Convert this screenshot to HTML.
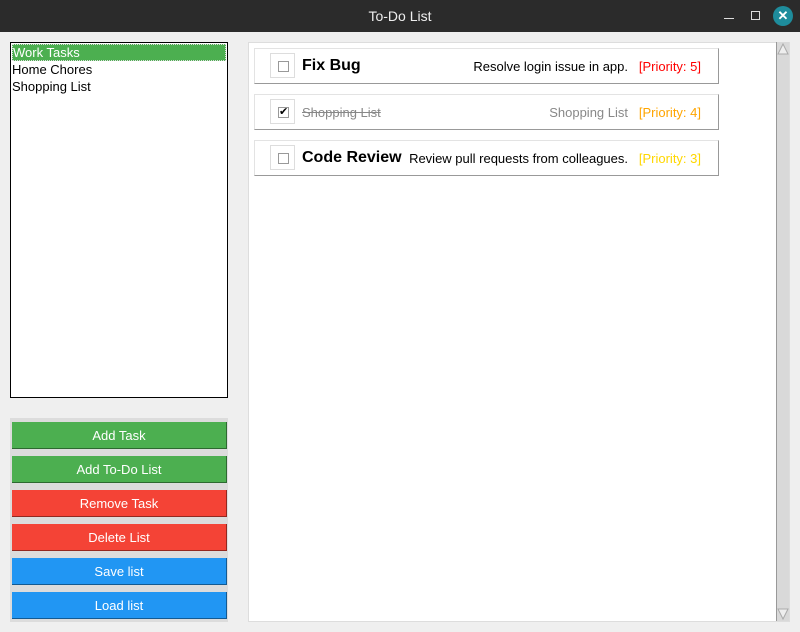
<!DOCTYPE html>
<html><head><style>
*{margin:0;padding:0;box-sizing:border-box}
body{width:800px;height:632px;background:#efefef;font-family:"Liberation Sans",sans-serif;position:relative;overflow:hidden}
.tb{position:absolute;left:0;top:0;width:800px;height:32px;background:#2b2b2b;color:#eee;font-size:14px;text-align:center;line-height:32px}
.lb{position:absolute;left:10px;top:42px;width:218px;height:356px;background:#fff;border:1px solid #000;font-size:13px}
.lb div{height:17px;line-height:17px;padding-left:1px}
.lb .sel{background:#4caf50;color:#fff;border:1px dotted #ddd;margin:1px 1px 0;padding-left:0;line-height:15px}
.bf{position:absolute;left:10px;top:418px;width:218px;height:204px;background:#dcdcdc}
.btn{position:absolute;left:2px;width:215px;height:27px;color:#fff;font-size:13px;text-align:center;line-height:27px;border-right:1px solid rgba(0,0,0,.4);border-bottom:1px solid rgba(0,0,0,.4)}
.g{background:#4caf50}.r{background:#f44336}.b{background:#2196f3}
.rp{position:absolute;left:248px;top:42px;width:542px;height:580px;background:#fff;border:1px solid #ddd}
.sb{position:absolute;left:776px;top:42px;width:13px;height:579px;background:#d9d9d9;border-left:1px solid #999}
.row{position:absolute;left:254px;width:465px;height:36px;border:1px solid #e3e3e3;border-right-color:#999;border-bottom:1px solid #999;background:#fff}
.cb{position:absolute;left:15px;top:4px;width:25px;height:25px;border:1px solid #ddd}
.cb i{position:absolute;left:7px;top:7px;width:11px;height:11px;border:1px solid #999;background:#fff;font-style:normal;font-size:11px;line-height:9px;text-align:center}
.t{position:absolute;left:47px;top:8px;font-size:16px;font-weight:bold}
.d{position:absolute;right:90px;top:10px;font-size:13px}
.p{position:absolute;right:17px;top:10px;font-size:13px}
</style></head><body>
<div class="tb">To-Do List
<span style="position:absolute;left:724px;top:18px;width:10px;height:1px;background:#ddd"></span>
<span style="position:absolute;left:751px;top:11px;width:9px;height:9px;border:1px solid #ddd"></span>
<span style="position:absolute;left:773px;top:6px;width:20px;height:20px;border-radius:50%;background:#1e8c9c;color:#fff;font-size:13px;line-height:20px;font-weight:bold">✕</span>
</div>
<div class="lb"><div class="sel">Work Tasks</div><div>Home Chores</div><div>Shopping List</div></div>
<div class="bf">
<div class="btn g" style="top:4px">Add Task</div>
<div class="btn g" style="top:38px">Add To-Do List</div>
<div class="btn r" style="top:72px">Remove Task</div>
<div class="btn r" style="top:106px">Delete List</div>
<div class="btn b" style="top:140px">Save list</div>
<div class="btn b" style="top:174px">Load list</div>
</div>
<div class="rp"></div>
<div class="sb">
<svg style="position:absolute;left:0;top:0" width="12" height="14"><polygon points="1,12 6,2 11,12" fill="#eee" stroke="#aaa"/></svg>
<svg style="position:absolute;left:0;bottom:0" width="12" height="14"><polygon points="1,2 6,12 11,2" fill="#eee" stroke="#aaa"/></svg>
</div>
<div class="row" style="top:48px"><div class="cb"><i></i></div><div class="t">Fix Bug</div><div class="d">Resolve login issue in app.</div><div class="p" style="color:#f00">[Priority: 5]</div></div>
<div class="row" style="top:94px"><div class="cb"><i>✔</i></div><div class="t" style="font-weight:normal;font-size:13px;top:10px;color:#888;text-decoration:line-through">Shopping List</div><div class="d" style="color:#888">Shopping List</div><div class="p" style="color:#ffa500">[Priority: 4]</div></div>
<div class="row" style="top:140px"><div class="cb"><i></i></div><div class="t">Code Review</div><div class="d">Review pull requests from colleagues.</div><div class="p" style="color:#ffd700">[Priority: 3]</div></div>
</body></html>
